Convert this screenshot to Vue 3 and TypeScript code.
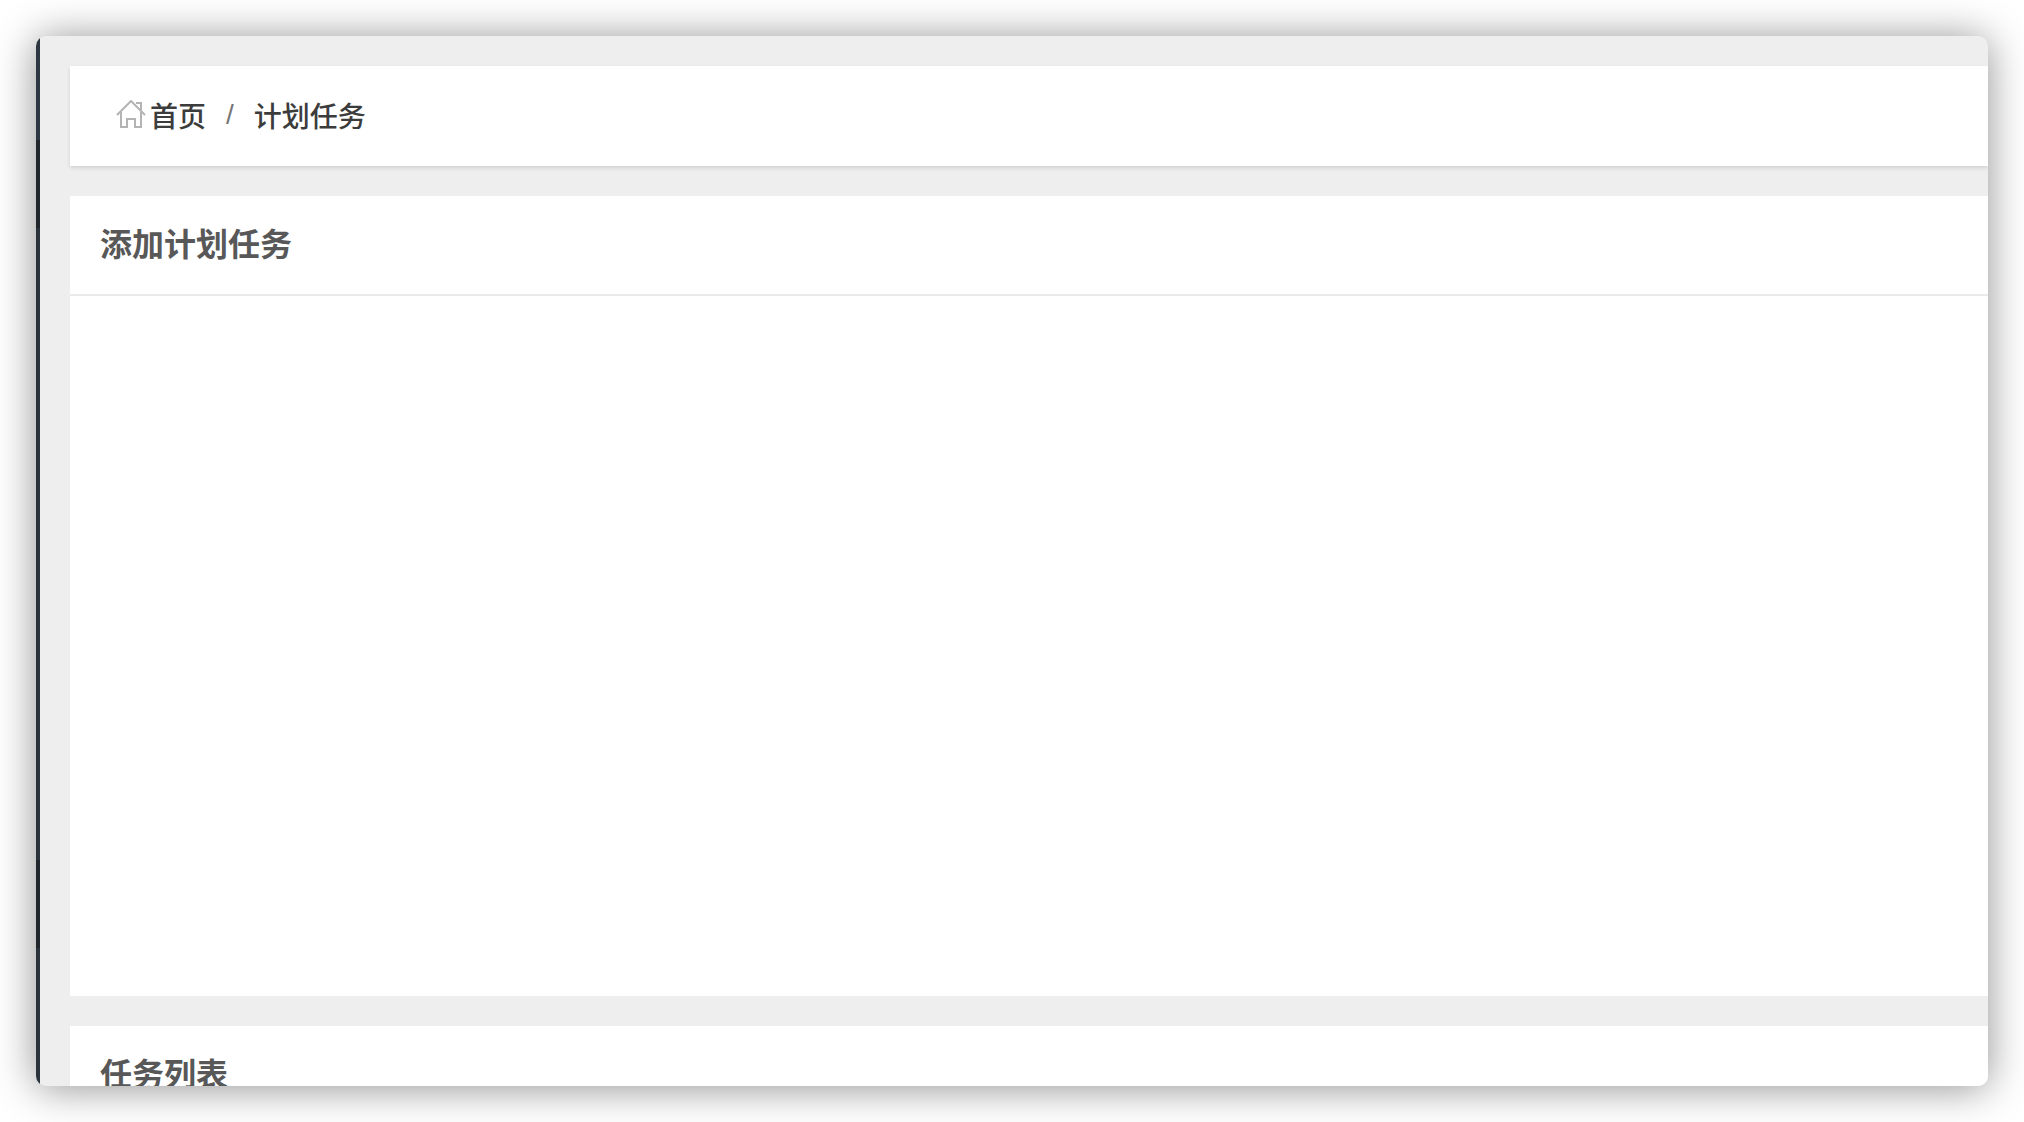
<script setup lang="ts">
const crumb = '计划任务'
</script>

<template>
  <div class="stage">
    <div class="window">
      <aside class="sidebar"></aside>
      <main class="content">
        <nav class="breadcrumb" aria-label="breadcrumb">
          <a class="home" href="#">
            <svg class="icon" viewBox="0 0 30 30" aria-hidden="true">
              <path d="M1 15L15 1L29 15M5 12V27H11V19H19V27H25V12M20 3H25V10" />
            </svg>
            <span>首页</span>
          </a>
          <span class="slash">/</span>
          <span>{{ crumb }}</span>
        </nav>
        <section class="card form-card">
          <h2>添加计划任务</h2>
        </section>
        <section class="card">
          <h2>任务列表</h2>
        </section>
      </main>
    </div>
  </div>
</template>

<style>
body {
  margin: 0;
  background: #fff;
}
</style>

<style scoped>
.stage {
  box-sizing: border-box;
  height: 100vh;
  padding: 36px;
  overflow: hidden;
  font-family: "Noto Sans CJK SC", sans-serif;
}
.window {
  display: flex;
  height: 100%;
  overflow: hidden;
  border-radius: 10px;
  background: #eee;
  box-shadow: 0 2px 42px rgba(0, 0, 0, 0.44);
}
.sidebar {
  flex: none;
  width: 4px;
  background: linear-gradient(
    #2d3741 0 104px,
    #20262c 104px 192px,
    #2a323b 192px 824px,
    #20262c 824px 912px,
    #2a323b 912px
  );
}
.content {
  flex: 1;
  display: flex;
  flex-direction: column;
  gap: 30px;
  padding: 30px 0 0 30px;
}
.breadcrumb {
  box-sizing: border-box;
  display: flex;
  flex: none;
  align-items: center;
  height: 100px;
  padding: 0 0 2px 46px;
  background: #fff;
  box-shadow: 0 2px 4px rgba(0, 0, 0, 0.12);
  color: #3c3c3c;
  font-size: 28px;
  font-weight: 500;
  line-height: 40px;
}
.home {
  display: flex;
  align-items: center;
  gap: 4px;
  color: inherit;
  text-decoration: none;
}
.icon {
  width: 30px;
  height: 30px;
  fill: none;
  stroke: #b4b4b4;
  stroke-width: 2;
}
.slash {
  margin: 0 20px;
  color: #777;
  font-family: "Liberation Sans", sans-serif;
  font-weight: 400;
}
.card {
  flex: none;
  background: #fff;
}
.form-card {
  min-height: 800px;
}
h2 {
  box-sizing: border-box;
  height: 100px;
  margin: 0;
  padding-left: 30px;
  border-bottom: 2px solid #eaeaea;
  color: #585858;
  font-size: 32px;
  font-weight: 700;
  line-height: 92px;
}
</style>
